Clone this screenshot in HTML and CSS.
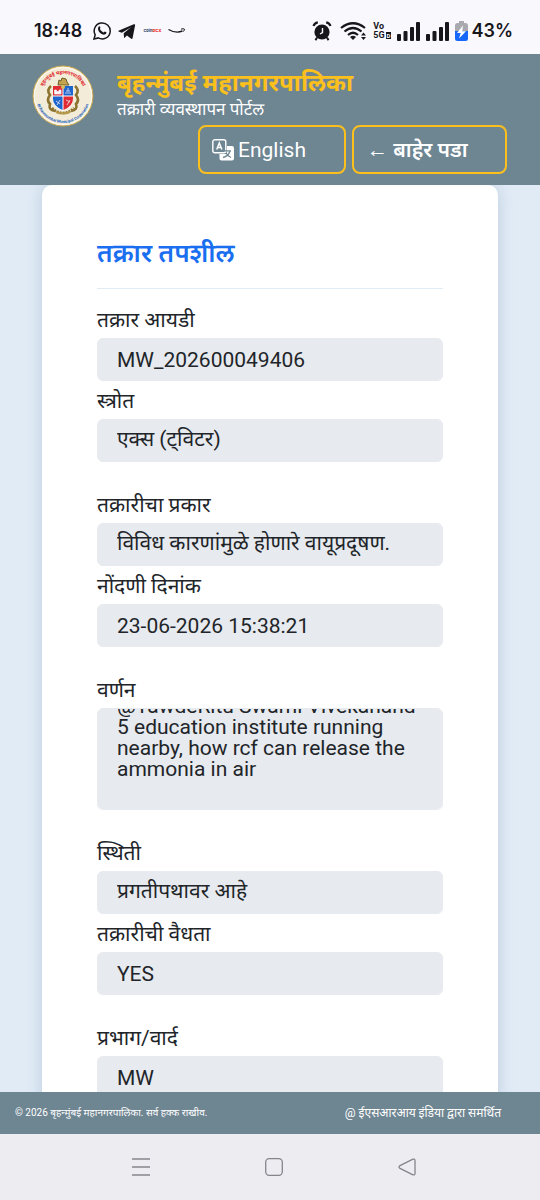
FILE: index.html
```html
<!DOCTYPE html>
<html lang="mr">
<head>
<meta charset="utf-8">
<meta name="viewport" content="width=device-width, initial-scale=1">
<title>तक्रार तपशील</title>
<link rel="stylesheet" href="styles.css">
</head>
<body>
<div class="status">
  <div class="status-group">
    <span class="clock">18:48</span>
    <svg class="ic-whatsapp" width="18" height="18" viewBox="0 0 18 18" fill="none" stroke="#17171b" stroke-width="1.5"><path d="M1 17l1.200-4.200A8 8 0 1 1 5.300 15.900z"/><path d="M5.400 5c.9-1.300 1.500-.9 2 .6.200.7-.6 1.100-.4 1.500.8 1.700 2 2.600 3.500 3.300.5.200 1-1 1.500-.8 1.300.6 1.800.8 1.300 1.700-1.400 2.300-4 1.300-5.800 0C5.500 9.600 4.300 7.300 5.400 5z" fill="#17171b" stroke="none"/></svg>
    <svg class="ic-telegram" width="18" height="15" viewBox="0 0 18 15"><path d="M1 6.600L15.800.3c1-.4 1.500 0 1.300 1L14.600 14c-.2 1-.9 1.200-1.700.6l-4-3-2 2c-.5.500-.9.300-.9-.4L5.700 9.200 13 3.200 3.900 8.700 1 7.700c-.8-.3-.8-.8 0-1.100z" fill="#17171b"/></svg>
    <span class="coin">Coin<b>DCX</b></span>
    <svg class="ic-smile" width="18" height="8" viewBox="0 0 18 8" fill="none" stroke="#17171b"><path d="M.5 2.500Q8 6.800 14.500 4" stroke-width="1.400"/><path d="M13 2.200q3-1 3.300-.2t-.8 2.500" stroke-width="1"/></svg>
  </div>
  <div class="status-group status-right">
    <svg class="ic-alarm" width="20" height="20" viewBox="0 0 20 20" fill="none" stroke="#17171b"><circle cx="10" cy="11" r="7.600" fill="#17171b" stroke="none"/><path d="M1.500 5Q2.500 2 5.800 1.400M18.500 5Q17.500 2 14.200 1.400" stroke-width="2.200"/><path d="M5 16.500l-1.500 2.700M15 16.500l1.500 2.700" stroke-width="2"/><path d="M10.500 7v4.500L8 13" stroke="#f9f8fd" stroke-width="1.400"/></svg>
    <svg class="ic-wifi" width="27" height="20" viewBox="0 0 27 20" fill="none" stroke="#17171b" stroke-width="2.200"><path d="M1 7Q13 -2.500 25 7"/><path d="M4.500 10.500Q13 3.500 21.500 10.500"/><path d="M8 14Q13 9.500 18 14"/><path d="M10 16q3-2.400 6 0l-3 3z" fill="#17171b" stroke="none"/><path d="M21 14.500l2.500-3 2.500 3zM21 16l2.500 3 2.500-3z" fill="#17171b" stroke="none"/></svg>
    <span class="volte"><span>Vo</span><span>5G<i>D</i></span></span>
    <svg class="ic-signal" width="23" height="19" viewBox="0 0 23 19" fill="#17171b"><rect y="12" width="4" height="7" rx="1"/><rect x="6.500" y="9" width="4" height="10" rx="1"/><rect x="13" y="5" width="4" height="14" rx="1"/><rect x="19" y="0" width="4" height="19" rx="1"/></svg>
    <svg class="ic-signal" width="23" height="19" viewBox="0 0 23 19" fill="#17171b"><rect y="12" width="4" height="7" rx="1"/><rect x="6.500" y="9" width="4" height="10" rx="1"/><rect x="13" y="5" width="4" height="14" rx="1"/><rect x="19" y="0" width="4" height="19" rx="1"/></svg>
    <svg class="ic-battery" width="13" height="20" viewBox="0 0 13 20"><path d="M4 0h5v2h1.500A2.500 2.500 0 0 1 13 4.500V10H0V4.500A2.500 2.500 0 0 1 2.500 2H4z" fill="#a9a9b0"/><path d="M0 10h13v7.500a2.500 2.500 0 0 1-2.500 2.500h-8A2.500 2.500 0 0 1 0 17.500z" fill="#1668fb"/><path d="M8 4.500L2 12h3.700L4 17.500l7-7.300H7.200z" fill="#fff"/></svg>
    <span class="percent">43%</span>
  </div>
</div>

<header class="header">
  <div class="brand">
    <svg class="logo" width="62" height="62" viewBox="0 0 62 62">
      <defs><path id="arc-top" d="M9 31a22 22 0 0 1 44 0"/><path id="arc-bottom" d="M4 31a27 27 0 0 0 54 0"/></defs>
      <circle cx="31" cy="31" r="30" fill="#f3ecd8" stroke="#c9a84e" stroke-width="1"/>
      <circle cx="31" cy="31" r="28.500" fill="none" stroke="#fffaf0" stroke-width="1"/>
      <text class="logo-top"><textPath href="#arc-top" startOffset="50%" text-anchor="middle">बृहन्मुंबई महानगरपालिका</textPath></text>
      <text class="logo-bottom"><textPath href="#arc-bottom" startOffset="50%" text-anchor="middle">Brihanmumbai Municipal Corporation</textPath></text>
      <g fill="none" stroke="#8b7330" stroke-width="2.600"><path d="M19 21q-5 4-1 9-4 5 0 9-2 6 5 7"/><path d="M43 21q5 4 1 9 4 5 0 9 2 6-5 7"/><path d="M20 43q5 5 11 5t11-5" stroke-dasharray="2 1"/></g>
      <path d="M26 20l1-5 2 1 1-3 4 1 1 3 2 3z" fill="#c3a550" stroke="#6d5b2b"/>
      <path d="M21 21h20v13q0 8-10 12-10-4-10-12z" fill="#fff"/>
      <path d="M21 21h9.500v9.500H21z" fill="#e12b32"/><path d="M31.500 21H41v9.500h-9.500z" fill="#1d65cf"/>
      <path d="M21 31.500h9.500V45Q21 41 21 34z" fill="#1d65cf"/><path d="M31.500 31.500H41V34q0 7-9.500 11z" fill="#e12b32"/>
      <path d="M22.500 29v-4h2v1.500h2.500V25h2v4zM33 28h6M34 26h4M36 23v3M24 36l4 3M28 35l-3 5M34 35l4 2M35 40l3-5" fill="#fff" stroke="#e9e6f4" stroke-width=".8"/>
      <circle cx="31" cy="22" r="2" fill="#d9bd59"/><path d="M24 47q7 3 14 0" fill="none" stroke="#b69a4a" stroke-width="2"/>
    </svg>
    <div class="brand-text">
      <h1 class="brand-name">बृहन्मुंबई महानगरपालिका</h1>
      <p class="brand-sub">तक्रारी व्यवस्थापन पोर्टल</p>
    </div>
  </div>
  <div class="actions">
    <button type="button" class="btn btn-lang">
      <svg width="22" height="22" viewBox="0 0 22 22" fill="none" stroke="#fff"><rect x=".8" y=".8" width="13" height="13" rx="2" stroke-width="1.400"/><path d="M4.700 10.500L7.300 4l2.600 6.500M5.500 8.500h3.600" stroke-width="1.500"/><path d="M15 7h5a2 2 0 0 1 2 2v10.500a2 2 0 0 1-2 2H9.500a2 2 0 0 1-2-2V15H13a2 2 0 0 0 2-2z" fill="#fff" stroke="none"/><path d="M12.500 11.800H19M18 12q-1.500 5-7 6.500M14 14q2 3.500 5 4.500" stroke="#6e8592" stroke-width="1.300"/></svg>
      English
    </button>
    <button type="button" class="btn btn-exit">← बाहेर पडा</button>
  </div>
</header>

<main class="page">
  <form class="card">
    <h2 class="card-title">तक्रार तपशील</h2>
    <div class="group">
      <div class="field"><label for="id">तक्रार आयडी</label><input id="id" value="MW_202600049406" readonly></div>
      <div class="field"><label for="source">स्त्रोत</label><input id="source" value="एक्स (ट्विटर)" readonly></div>
    </div>
    <div class="group">
      <div class="field"><label for="type">तक्रारीचा प्रकार</label><input id="type" value="विविध कारणांमुळे होणारे वायूप्रदूषण." readonly></div>
      <div class="field"><label for="date">नोंदणी दिनांक</label><input id="date" value="23-06-2026 15:38:21" readonly></div>
    </div>
    <div class="group">
      <div class="field"><label for="desc">वर्णन</label><textarea id="desc" readonly>@TawdeRitu Swami Vivekanand 5 education institute running nearby, how rcf can release the ammonia in air</textarea></div>
    </div>
    <div class="group">
      <div class="field"><label for="state">स्थिती</label><input id="state" value="प्रगतीपथावर आहे" readonly></div>
      <div class="field"><label for="valid">तक्रारीची वैधता</label><input id="valid" value="YES" readonly></div>
    </div>
    <div class="group">
      <div class="field"><label for="ward">प्रभाग/वार्द</label><input id="ward" value="MW" readonly></div>
    </div>
  </form>
</main>

<footer class="footer">
  <span class="copyright">© 2026 बृहन्मुंबई महानगरपालिका. सर्व हक्क राखीव.</span>
  <span class="powered">@ ईएसआरआय इंडिया द्वारा समर्थित</span>
</footer>

<nav class="sysnav">
  <button type="button" aria-label="Recent apps"><svg width="18" height="20" viewBox="0 0 18 20" stroke="#85858c" stroke-width="1.500"><path d="M0 2h18M0 10h18M0 18h18"/></svg></button>
  <button type="button" aria-label="Home"><svg width="18" height="18" viewBox="0 0 18 18" fill="none" stroke="#85858c" stroke-width="1.300"><rect x=".7" y=".7" width="16.600" height="16.600" rx="3.500"/></svg></button>
  <button type="button" aria-label="Back"><svg width="18" height="18" viewBox="0 0 18 18" fill="none" stroke="#85858c" stroke-width="1.300"><path d="M15 1.200L2 7.600q-2 1.400 0 2.800l13 6.400q2 .6 2-1.300v-13q0-1.900-2-1.300z"/></svg></button>
</nav>
<script src="script.js"></script>
</body>
</html>
```
FILE: styles.css
```css
* { box-sizing: border-box; }

body {
  margin: 0;
  height: 100vh;
  display: flex;
  flex-direction: column;
  font-family: Roboto, "Noto Sans Devanagari", "Noto Sans", sans-serif;
  color: #212529;
  background: #e0ebf6;
}

h1, h2, p { margin: 0; }
button, input, textarea { font: inherit; color: inherit; }
svg { display: block; flex: none; }

.status {
  flex: none;
  display: flex;
  align-items: center;
  justify-content: space-between;
  height: 54px;
  padding: 8px 27px 0 34px;
  background: #f9f8fd;
  color: #17171b;
}
.status-group { display: flex; align-items: center; gap: 7px; }
.clock, .percent { font: 600 18px/24px Inter, sans-serif; }
.clock { margin-right: 4px; }
.coin { font: 700 4px/8px Inter, sans-serif; color: #23305c; }
.coin b { color: #ee3a35; }
.status-right { gap: 6px; }
.ic-alarm { margin-right: 2px; }
.volte {
  display: flex;
  flex-direction: column;
  font: 700 9px/9px Roboto, sans-serif;
}
.volte i {
  margin-left: 1px;
  padding: 0 1px;
  font-size: 6px;
  font-style: normal;
  color: #fff;
  background: #17171b;
}
.percent { margin-left: -3px; }

.header {
  flex: none;
  position: relative;
  z-index: 1;
  height: 131px;
  padding: 11px 33px 0 32px;
  background: #6e8592;
  color: #fff;
}
.brand { display: flex; gap: 23px; }
.brand-text { padding-top: 4px; }
.brand-name { font-size: 24px; line-height: 28px; font-weight: 700; color: #fcc01d; }
.brand-sub { font-size: 17px; line-height: 24px; }
.logo-top { font: 700 5px "Noto Sans Devanagari", "Noto Sans", sans-serif; fill: #e0262c; }
.logo-bottom { font: 700 4px Roboto, sans-serif; fill: #1c5fc0; }
.actions { display: flex; justify-content: flex-end; gap: 6px; margin-top: -2px; }
.btn {
  display: flex;
  align-items: center;
  gap: 4px;
  height: 49px;
  border: 2px solid #fcc01d;
  border-radius: 8px;
  background: none;
  color: #fff;
  font-size: 21px;
  line-height: 28px;
}
.btn-lang { width: 148px; padding: 0 12px; }
.btn-exit { width: 155px; padding: 0 13px; font-weight: 600; }

.page {
  flex: 1;
  min-height: 0;
  overflow: hidden;
  padding: 0 42px;
}
.card {
  padding: 48px 55px;
  border-radius: 10px;
  background: #fff;
  box-shadow: 0 0 16px rgba(60, 90, 130, 0.2);
}
.card-title {
  height: 56px;
  margin-bottom: 12px;
  border-bottom: 1px solid #e0ebf3;
  font-size: 26px;
  line-height: 40px;
  font-weight: 600;
  color: #1a6ff0;
}
.group { display: flex; flex-direction: column; gap: 1px; margin-bottom: 24px; }
.field { display: flex; flex-direction: column; }
.field label { height: 37px; font-size: 21px; line-height: 38px; }
.field input, .field textarea {
  width: 100%;
  border: 1px solid #e7eaee;
  border-radius: 6px;
  background: #e7eaee;
  font-size: 21px;
  outline: none;
}
.field input { height: 43px; padding: 0 19px; }
.field textarea {
  height: 102px;
  padding: 8px 19px 29px;
  line-height: 21px;
  resize: none;
  scrollbar-width: none;
}

.footer {
  flex: none;
  display: flex;
  align-items: center;
  justify-content: space-between;
  height: 42px;
  padding: 0 39px 0 15px;
  background: #6e8592;
  color: #fff;
}
.copyright { font-size: 10px; line-height: 16px; }
.powered { font-size: 12px; line-height: 16px; }

.sysnav {
  flex: none;
  display: flex;
  justify-content: center;
  gap: 93px;
  height: 66px;
  padding-left: 7px;
  background: #edecf1;
}
.sysnav button {
  display: flex;
  align-items: center;
  justify-content: center;
  width: 40px;
  padding: 0;
  border: 0;
  background: none;
}
```
FILE: script.js
```js
// Long descriptions open at their latest text.
const description = document.getElementById("desc");
description.scrollTop = description.scrollHeight;
```
